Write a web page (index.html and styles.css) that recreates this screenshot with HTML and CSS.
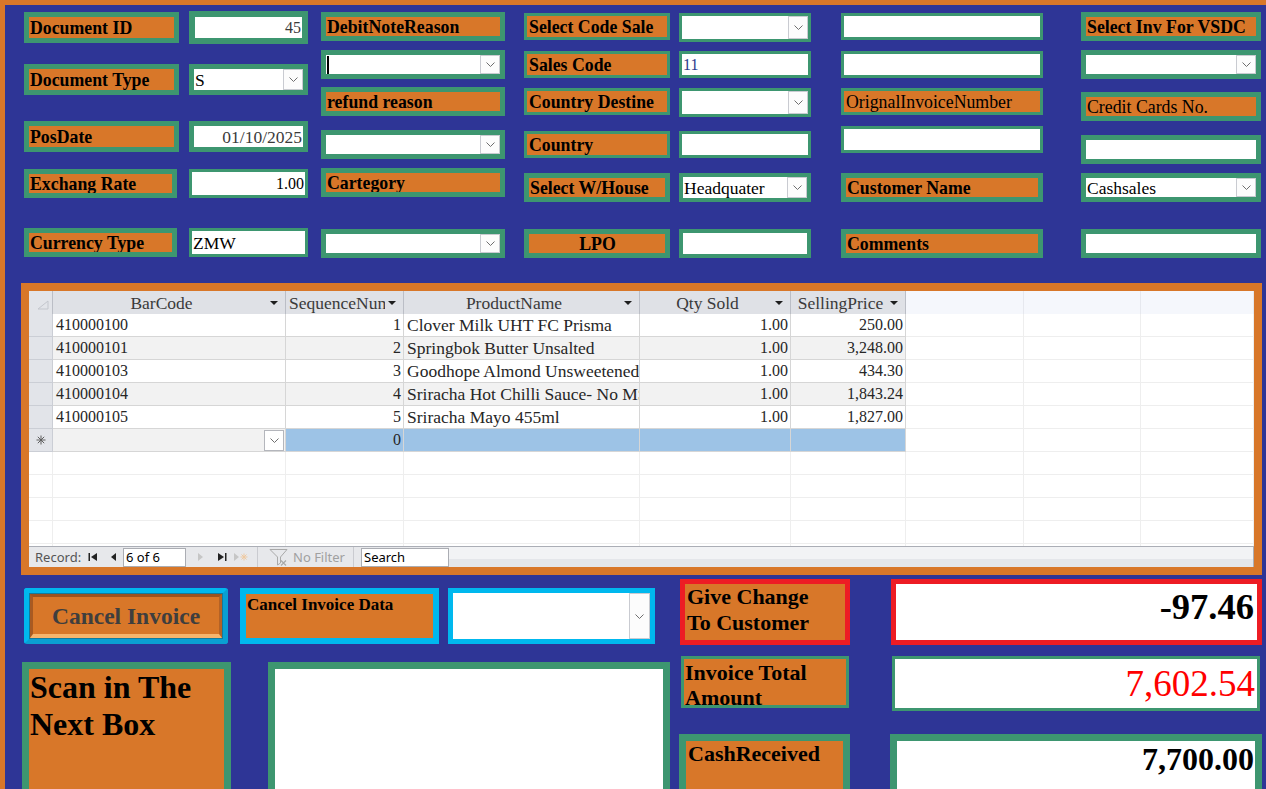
FILE: index.html
```html
<!DOCTYPE html>
<html>
<head>
<meta charset="utf-8">
<title>POS Invoice</title>
<link rel="stylesheet" href="styles.css">
</head>
<body>
<div class="app">
  <div class="form">
    <div class="col c1">
      <div class="lbl b5 h31 mt7">Document ID</div>
      <div class="lbl b5 h31 mt21">Document Type</div>
      <div class="lbl b5 h31 mt26">PosDate</div>
      <div class="lbl b5 h29 mt17 w153">Exchang Rate</div>
      <div class="lbl b5 h29 mt30 w153">Currency Type</div>
    </div>
    <div class="col c2">
      <div class="inp b6 h33 mt6 right num grey">45</div>
      <div class="inp combo b5 h31 mt20"><span class="val">S</span><span class="dd"><svg width="9" height="5" viewBox="0 0 9 5"><polyline points="0.5,0.5 4.5,4.5 8.5,0.5" fill="none" stroke="#6E6E6E" stroke-width="1"/></svg></span></div>
      <div class="inp b5 h31 mt26 right grey">01/10/2025</div>
      <div class="inp b3 h29 mt17 right num">1.00</div>
      <div class="inp b3 h29 mt30"><span class="val">ZMW</span></div>
    </div>
    <div class="col c3">
      <div class="lbl b5 h29 mt7">DebitNoteReason</div>
      <div class="inp combo b5 h29 mt9"><span class="caret"></span><span class="val"></span><span class="dd"><svg width="9" height="5" viewBox="0 0 9 5"><polyline points="0.5,0.5 4.5,4.5 8.5,0.5" fill="none" stroke="#6E6E6E" stroke-width="1"/></svg></span></div>
      <div class="lbl b5 h29 mt8">refund reason</div>
      <div class="inp combo b5 h29 mt14"><span class="val"></span><span class="dd"><svg width="9" height="5" viewBox="0 0 9 5"><polyline points="0.5,0.5 4.5,4.5 8.5,0.5" fill="none" stroke="#6E6E6E" stroke-width="1"/></svg></span></div>
      <div class="lbl b5 h29 mt9">Cartegory</div>
      <div class="inp combo b5 h29 mt32"><span class="val"></span><span class="dd"><svg width="9" height="5" viewBox="0 0 9 5"><polyline points="0.5,0.5 4.5,4.5 8.5,0.5" fill="none" stroke="#6E6E6E" stroke-width="1"/></svg></span></div>
    </div>
    <div class="col c4">
      <div class="lbl b3 h27 mt8 pl2">Select Code Sale</div>
      <div class="lbl b3 h27 mt11 pl2">Sales Code</div>
      <div class="lbl b3 h27 mt10 pl2">Country Destine</div>
      <div class="lbl b3 h27 mt16 pl2">Country</div>
      <div class="lbl b5 h29 mt15">Select W/House</div>
      <div class="lbl b5 h29 mt27 center">LPO</div>
    </div>
    <div class="col c5">
      <div class="inp combo b3 h29 mt8"><span class="val"></span><span class="dd"><svg width="9" height="5" viewBox="0 0 9 5"><polyline points="0.5,0.5 4.5,4.5 8.5,0.5" fill="none" stroke="#6E6E6E" stroke-width="1"/></svg></span></div>
      <div class="inp b3 h27 mt9"><span class="val num blue">11</span></div>
      <div class="inp combo b3 h29 mt10"><span class="val"></span><span class="dd"><svg width="9" height="5" viewBox="0 0 9 5"><polyline points="0.5,0.5 4.5,4.5 8.5,0.5" fill="none" stroke="#6E6E6E" stroke-width="1"/></svg></span></div>
      <div class="inp b3 h27 mt14"></div>
      <div class="inp combo b4 h29 mt15"><span class="val">Headquater</span><span class="dd"><svg width="9" height="5" viewBox="0 0 9 5"><polyline points="0.5,0.5 4.5,4.5 8.5,0.5" fill="none" stroke="#6E6E6E" stroke-width="1"/></svg></span></div>
      <div class="inp b4 h29 mt27"></div>
    </div>
    <div class="col c6">
      <div class="inp b3 h27 mt8"></div>
      <div class="inp b3 h27 mt11"></div>
      <div class="lbl reg b3 h27 mt10 pl2">OrignalInvoiceNumber</div>
      <div class="inp b3 h27 mt11"></div>
      <div class="lbl b5 h29 mt20">Customer Name</div>
      <div class="lbl b5 h29 mt27">Comments</div>
    </div>
    <div class="col c7">
      <div class="lbl b5 h29 mt7">Select Inv For VSDC</div>
      <div class="inp combo b5 h29 mt9"><span class="val"></span><span class="dd"><svg width="9" height="5" viewBox="0 0 9 5"><polyline points="0.5,0.5 4.5,4.5 8.5,0.5" fill="none" stroke="#6E6E6E" stroke-width="1"/></svg></span></div>
      <div class="lbl reg b5 h29 mt13">Credit Cards No.</div>
      <div class="inp b5 h29 mt14"></div>
      <div class="inp combo b5 h29 mt9"><span class="val">Cashsales</span><span class="dd"><svg width="9" height="5" viewBox="0 0 9 5"><polyline points="0.5,0.5 4.5,4.5 8.5,0.5" fill="none" stroke="#6E6E6E" stroke-width="1"/></svg></span></div>
      <div class="inp b5 h29 mt27"></div>
    </div>
  </div>

  <div class="gframe">
    <div class="grow ghead">
      <div class="gc gh corner"><svg width="12" height="10" viewBox="0 0 12 10"><polygon points="11,1 11,9 1,9" fill="none" stroke="#C3C6CD" stroke-width="1"/></svg></div>
      <div class="gc gh"><span class="ht">BarCode</span><i class="arr"></i></div>
      <div class="gc gh"><span class="ht">SequenceNum</span><i class="arr"></i></div>
      <div class="gc gh"><span class="ht">ProductName</span><i class="arr"></i></div>
      <div class="gc gh"><span class="ht">Qty Sold</span><i class="arr"></i></div>
      <div class="gc gh"><span class="ht">SellingPrice</span><i class="arr"></i></div>
      <div class="gc ge"></div>
      <div class="gc ge"></div>
      <div class="gc ge"></div>
    </div>
    <div class="gbody">
      <div class="grow">
        <div class="gc sel"></div><div class="gc n">410000100</div><div class="gc n r">1</div><div class="gc t">Clover Milk UHT FC Prisma</div><div class="gc n r">1.00</div><div class="gc n r">250.00</div><div class="gc e"></div><div class="gc e"></div><div class="gc e"></div>
      </div>
      <div class="grow alt">
        <div class="gc sel"></div><div class="gc n">410000101</div><div class="gc n r">2</div><div class="gc t">Springbok Butter Unsalted</div><div class="gc n r">1.00</div><div class="gc n r">3,248.00</div><div class="gc e"></div><div class="gc e"></div><div class="gc e"></div>
      </div>
      <div class="grow">
        <div class="gc sel"></div><div class="gc n">410000103</div><div class="gc n r">3</div><div class="gc t">Goodhope Almond Unsweetened</div><div class="gc n r">1.00</div><div class="gc n r">434.30</div><div class="gc e"></div><div class="gc e"></div><div class="gc e"></div>
      </div>
      <div class="grow alt">
        <div class="gc sel"></div><div class="gc n">410000104</div><div class="gc n r">4</div><div class="gc t">Sriracha Hot Chilli Sauce- No MSG</div><div class="gc n r">1.00</div><div class="gc n r">1,843.24</div><div class="gc e"></div><div class="gc e"></div><div class="gc e"></div>
      </div>
      <div class="grow">
        <div class="gc sel"></div><div class="gc n">410000105</div><div class="gc n r">5</div><div class="gc t">Sriracha Mayo 455ml</div><div class="gc n r">1.00</div><div class="gc n r">1,827.00</div><div class="gc e"></div><div class="gc e"></div><div class="gc e"></div>
      </div>
      <div class="grow newrow">
        <div class="gc sel star"><svg width="10" height="10" viewBox="0 0 10 10"><g stroke="#5E5E5E" stroke-width="1"><line x1="5" y1="0.5" x2="5" y2="9.5"/><line x1="0.5" y1="5" x2="9.5" y2="5"/><line x1="1.8" y1="1.8" x2="8.2" y2="8.2"/><line x1="8.2" y1="1.8" x2="1.8" y2="8.2"/></g></svg></div>
        <div class="gc n bc"><span class="gdd"><svg width="9" height="5" viewBox="0 0 9 5"><polyline points="0.5,0.5 4.5,4.5 8.5,0.5" fill="none" stroke="#6E6E6E" stroke-width="1"/></svg></span></div>
        <div class="gc n r hl">0</div><div class="gc hl"></div><div class="gc hl"></div><div class="gc hl"></div><div class="gc e"></div><div class="gc e"></div><div class="gc e"></div>
      </div>
      <div class="grow empty"><div class="gc e"></div><div class="gc e"></div><div class="gc e"></div><div class="gc e"></div><div class="gc e"></div><div class="gc e"></div><div class="gc e"></div><div class="gc e"></div><div class="gc e"></div></div>
      <div class="grow empty"><div class="gc e"></div><div class="gc e"></div><div class="gc e"></div><div class="gc e"></div><div class="gc e"></div><div class="gc e"></div><div class="gc e"></div><div class="gc e"></div><div class="gc e"></div></div>
      <div class="grow empty"><div class="gc e"></div><div class="gc e"></div><div class="gc e"></div><div class="gc e"></div><div class="gc e"></div><div class="gc e"></div><div class="gc e"></div><div class="gc e"></div><div class="gc e"></div></div>
      <div class="grow empty"><div class="gc e"></div><div class="gc e"></div><div class="gc e"></div><div class="gc e"></div><div class="gc e"></div><div class="gc e"></div><div class="gc e"></div><div class="gc e"></div><div class="gc e"></div></div>
      <div class="grow empty"><div class="gc e"></div><div class="gc e"></div><div class="gc e"></div><div class="gc e"></div><div class="gc e"></div><div class="gc e"></div><div class="gc e"></div><div class="gc e"></div><div class="gc e"></div></div>
    </div>
    <div class="nav">
      <div class="navl">
        <span class="reclbl">Record:</span>
        <span class="nb nb-first"><svg width="10" height="10" viewBox="0 0 10 10"><rect x="0.5" y="1" width="1.5" height="8" fill="#222"/><polygon points="9,1 3,5 9,9" fill="#222"/></svg></span>
        <span class="nb nb-prev"><svg width="7" height="10" viewBox="0 0 7 10"><polygon points="6,1 1,5 6,9" fill="#222"/></svg></span>
        <span class="recbox">6 of 6</span>
        <span class="nb nb-next"><svg width="7" height="10" viewBox="0 0 7 10"><polygon points="1,1 6,5 1,9" fill="#C6C6C6"/></svg></span>
        <span class="nb nb-last"><svg width="10" height="10" viewBox="0 0 10 10"><polygon points="1,1 7,5 1,9" fill="#222"/><rect x="8" y="1" width="1.5" height="8" fill="#222"/></svg></span>
        <span class="nb nb-new"><svg width="15" height="10" viewBox="0 0 15 10"><polygon points="1,1 6,5 1,9" fill="#C6C6C6"/><g stroke="#EFC9A0" stroke-width="1"><line x1="11" y1="1.5" x2="11" y2="8.5"/><line x1="7.5" y1="5" x2="14.5" y2="5"/><line x1="8.5" y1="2.5" x2="13.5" y2="7.5"/><line x1="13.5" y1="2.5" x2="8.5" y2="7.5"/></g></svg></span>
        <span class="sep sep1"></span>
        <span class="funnel"><svg width="20" height="19" viewBox="0 0 20 19"><path d="M1 1.5 H18 L11.5 9 V15 L8.5 17 V9 Z" fill="none" stroke="#A9A9A9" stroke-width="1"/><path d="M12 12.5 L17 17.5 M17 12.5 L12 17.5" stroke="#A9A9A9" stroke-width="1.2"/></svg></span>
        <span class="nofilter">No Filter</span>
        <span class="sep sep2"></span>
        <span class="searchbox">Search</span>
      </div>
    </div>
  </div>

  <div class="bottom">
    <div class="bl">
      <div class="blrow1">
        <div class="cwrap"><div class="cbtn">Cancel Invoice</div></div>
        <div class="cid">Cancel Invoice Data</div>
        <div class="ccombo"><span class="val"></span><span class="dd"><svg width="9" height="5" viewBox="0 0 9 5"><polyline points="0.5,0.5 4.5,4.5 8.5,0.5" fill="none" stroke="#6E6E6E" stroke-width="1"/></svg></span></div>
      </div>
      <div class="blrow2">
        <div class="scan">Scan in The<br>Next Box</div>
        <div class="scanbox"></div>
      </div>
    </div>
    <div class="br">
      <div class="brrow r1">
        <div class="gchg">Give Change<br>To Customer</div>
        <div class="gchgv">-97.46</div>
      </div>
      <div class="brrow r2">
        <div class="itot">Invoice Total<br>Amount</div>
        <div class="itotv">7,602.54</div>
      </div>
      <div class="brrow r3">
        <div class="crec">CashReceived</div>
        <div class="crecv">7,700.00</div>
      </div>
    </div>
  </div>
</div>
</body>
</html>
```

FILE: styles.css
```css
* { box-sizing: border-box; }
html, body { margin: 0; padding: 0; overflow: hidden; }
body {
  background: #D87729;
  font-family: "Liberation Serif", "Times New Roman", serif;
  color: #000;
}
.app {
  margin: 5px 0 0 5px;
  height: 784px;
  background: #2E3596;
  overflow: hidden;
}

/* ---------- top form ---------- */
.form { display: flex; align-items: flex-start; height: 278px; }
.col { display: flex; flex-direction: column; flex: none; }
.c1 { margin-left: 19px; width: 155px; }
.c2 { margin-left: 10px; width: 119px; }
.c3 { margin-left: 13px; width: 184px; }
.c4 { margin-left: 19px; width: 146px; }
.c5 { margin-left: 9px; width: 132px; }
.c6 { margin-left: 30px; width: 202px; }
.c7 { margin-left: 38px; width: 180px; }

.lbl {
  background: #D87729;
  border: 5px solid #3D9670;
  font-weight: bold;
  font-size: 17.8px;
  line-height: 20px;
  display: flex;
  align-items: center;
  padding-left: 1px;
  white-space: nowrap;
  overflow: hidden;
  flex: none;
}
.reg { font-weight: normal; }
.center { justify-content: center; }
.pl2 { padding-left: 2px; }
.w153 { width: 153px; }

.inp {
  background: #fff;
  border: 5px solid #3D9670;
  display: flex;
  align-items: center;
  font-size: 17.5px;
  line-height: 20px;
  white-space: nowrap;
  overflow: hidden;
  flex: none;
}
.inp .val { flex: 1; padding-left: 1px; overflow: hidden; line-height: 20px; }
.right { justify-content: flex-end; padding-right: 1px; }
.num { font-size: 16px; }
.grey { color: #3A3A3A; }
.blue { color: #2B3A8C; }
.caret { width: 2px; height: 18px; background: #000; margin-left: 1px; flex: none; }
.dd {
  width: 20px;
  align-self: stretch;
  flex: none;
  border: 1px solid #C9CBD1;
  background: #FCFCFC;
  display: flex;
  align-items: center;
  justify-content: center;
}

.b3 { border-width: 3px; }
.b4 { border-width: 4px; }
.b5 { border-width: 5px; }
.b6 { border-width: 6px; }
.h27 { height: 27px; }
.h29 { height: 29px; }
.h31 { height: 31px; }
.h33 { height: 33px; }
.mt6 { margin-top: 6px; }
.mt7 { margin-top: 7px; }
.mt8 { margin-top: 8px; }
.mt9 { margin-top: 9px; }
.mt10 { margin-top: 10px; }
.mt11 { margin-top: 11px; }
.mt13 { margin-top: 13px; }
.mt14 { margin-top: 14px; }
.mt15 { margin-top: 15px; }
.mt16 { margin-top: 16px; }
.mt17 { margin-top: 17px; }
.mt20 { margin-top: 20px; }
.mt21 { margin-top: 21px; }
.mt26 { margin-top: 26px; }
.mt27 { margin-top: 27px; }
.mt30 { margin-top: 30px; }
.mt32 { margin-top: 32px; }

/* ---------- datasheet ---------- */
.gframe {
  margin-left: 16px;
  width: 1241px;
  height: 292px;
  border: 8px solid #D87729;
  background: #fff;
  display: flex;
  flex-direction: column;
}
.grow {
  display: grid;
  grid-template-columns: 24px 233px 118px 236px 151px 115px 118px 117px 113px;
  height: 23px;
  flex: none;
}
.gc {
  border-right: 1px solid #D6D6D6;
  border-bottom: 1px solid #D6D6D6;
  display: flex;
  align-items: center;
  overflow: hidden;
  white-space: nowrap;
  padding: 0 2px 0 3px;
  font-size: 17.5px;
  line-height: 20px;
  color: #262626;
  background: #fff;
}
.gc.n { font-size: 16px; }
.gc.r { justify-content: flex-end; }
.gh {
  background: #DFE1E6;
  border-right: 1px solid #BBBEC6;
  border-bottom: none;
  padding: 0 7px 0 3px;
  color: #3A3A3A;
}
.ht { flex: 1; text-align: center; overflow: hidden; }
.arr {
  flex: none;
  width: 0;
  height: 0;
  border-left: 4px solid transparent;
  border-right: 4px solid transparent;
  border-top: 4px solid #1E1E1E;
  margin-left: 3px;
}
.corner { justify-content: flex-end; align-items: flex-end; padding: 0 3px 4px 0; background: #E2E4E9; }
.ge { background: #F5F7FC; border-right: 1px solid #E6E8EE; border-bottom: none; }
.gbody { height: 232px; overflow: hidden; flex: none; }
.gc.sel { background: #E2E4E9; border-bottom-color: #CBCED5; border-right-color: #CBCED5; }
.alt .gc { background: #F2F2F2; }
.alt .gc.sel { background: #E2E4E9; }
.gc.e { background: #fff; border-right-color: #EEEEEE; border-bottom-color: #EEEEEE; }
.newrow .gc.bc { background: #F2F2F2; justify-content: flex-end; padding-right: 1px; }
.star { justify-content: center; padding: 0; }
.gc.hl { background: #9DC3E6; }
.gdd {
  width: 20px;
  height: 21px;
  border: 1px solid #B4B6BC;
  background: #fff;
  display: flex;
  align-items: center;
  justify-content: center;
}

.nav {
  height: 21px;
  flex: none;
  display: flex;
  background: linear-gradient(#F2F3F5 0, #F2F3F5 60%, #E4E6EA 60%);
  border-top: 1px solid #ABAEB6;
  border-right: 1px solid #ABAEB6;
  font-family: "Noto Sans", "Open Sans", sans-serif;
  font-size: 13px;
  color: #555;
}
.navl { display: flex; align-items: center; height: 100%; background: #E7E8EB; }
.reclbl { margin-left: 6px; width: 48px; color: #555; }
.nb { display: flex; align-items: center; }
.nb-first { margin-left: 5px; }
.nb-prev { margin-left: 12px; }
.recbox {
  margin-left: 6px;
  width: 63px;
  height: 19px;
  background: #fff;
  border: 1px solid #ABADB3;
  color: #000;
  padding-left: 2px;
  line-height: 17px;
}
.nb-next { margin-left: 11px; }
.nb-last { margin-left: 13px; }
.nb-new { margin-left: 6px; }
.sep { width: 1px; height: 100%; background: #CACBD0; }
.sep1 { margin-left: 9px; }
.funnel { margin-left: 11px; display: flex; align-items: center; }
.nofilter { margin-left: 4px; width: 55px; color: #A0A0A0; }
.sep2 { margin-left: 5px; }
.searchbox {
  margin-left: 7px;
  width: 88px;
  height: 19px;
  background: #fff;
  border: 1px solid #ABADB3;
  color: #000;
  padding-left: 2px;
  line-height: 17px;
}

/* ---------- bottom ---------- */
.bottom { display: flex; align-items: flex-start; }
.bl { margin-left: 17px; width: 648px; flex: none; display: flex; flex-direction: column; }
.blrow1 { display: flex; margin-top: 13px; height: 56px; }
.cwrap {
  margin-left: 2px;
  width: 204px;
  height: 56px;
  border: 5px solid #00B8EE;
  border-right-color: #0A9FD2;
  border-bottom-color: #0A9FD2;
  border-radius: 3px;
  padding: 1px;
  background: #137A9C;
}
.cbtn {
  height: 100%;
  background: #D87729;
  border-top: 3px solid #9C5320;
  border-left: 3px solid #A85A22;
  border-right: 3px solid #B46226;
  border-bottom: 4px solid #F6B46C;
  display: flex;
  align-items: center;
  justify-content: center;
  font-size: 23.5px;
  font-weight: bold;
  color: #3E3E3E;
  line-height: 28px;
}
.cid {
  margin-left: 12px;
  width: 199px;
  height: 56px;
  border: 6px solid #00B8EE;
  background: #D87729;
  font-weight: bold;
  font-size: 17px;
  line-height: 20px;
  padding: 1px 0 0 1px;
  white-space: nowrap;
}
.ccombo {
  margin-left: 9px;
  width: 207px;
  height: 56px;
  border: 5px solid #00B8EE;
  background: #fff;
  display: flex;
}
.ccombo .val { flex: 1; }
.ccombo .dd { width: 21px; }
.blrow2 { display: flex; margin-top: 18px; }
.scan {
  width: 209px;
  height: 140px;
  border: 7px solid #3D9670;
  background: #D87729;
  font-weight: bold;
  font-size: 32px;
  line-height: 37px;
  padding: 0 2px 0 1px;
  white-space: nowrap;
}
.scanbox {
  margin-left: 37px;
  width: 402px;
  height: 140px;
  border: 7px solid #3D9670;
  background: #fff;
}

.br { margin-left: 9px; flex: none; display: flex; flex-direction: column; }
.brrow { display: flex; align-items: flex-start; }
.r1 { margin-top: 4px; }
.r2 { margin-top: 11px; }
.r3 { margin-top: 23px; }
.gchg {
  margin-left: 1px;
  width: 170px;
  height: 66px;
  border: 5px solid #ED1C24;
  background: #D87729;
  font-weight: bold;
  font-size: 22px;
  line-height: 26px;
  padding: 0 0 0 2px;
  white-space: nowrap;
}
.gchgv {
  margin-left: 41px;
  width: 371px;
  height: 66px;
  border: 5px solid #ED1C24;
  background: #fff;
  font-weight: bold;
  font-size: 36.5px;
  line-height: 41px;
  text-align: right;
  padding: 2px 3px 0 0;
}
.itot {
  margin-left: 2px;
  width: 168px;
  height: 52px;
  border: 3px solid #3D9670;
  background: #D87729;
  font-weight: bold;
  font-size: 22px;
  line-height: 25px;
  padding: 1px 0 0 1px;
  white-space: nowrap;
}
.itotv {
  margin-left: 43px;
  width: 368px;
  height: 55px;
  border: 3px solid #3D9670;
  background: #fff;
  color: #FF0000;
  font-size: 37px;
  line-height: 49px;
  text-align: right;
  padding-right: 2px;
}
.crec {
  width: 171px;
  height: 70px;
  border: 7px solid #3D9670;
  background: #D87729;
  font-weight: bold;
  font-size: 22px;
  line-height: 26px;
  padding: 0 0 0 2px;
}
.crecv {
  margin-left: 40px;
  width: 372px;
  height: 70px;
  border: 7px solid #3D9670;
  background: #fff;
  font-weight: bold;
  font-size: 32px;
  line-height: 37px;
  text-align: right;
  padding: 0 1px 0 0;
}
```
